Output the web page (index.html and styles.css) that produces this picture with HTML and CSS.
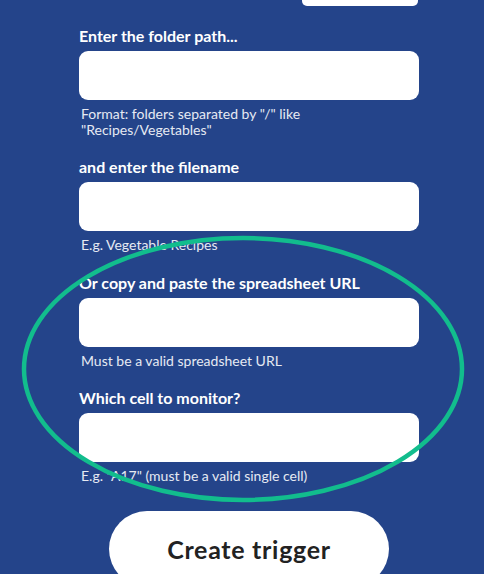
FILE: index.html
```html
<!DOCTYPE html>
<html lang="en">
<head>
<meta charset="utf-8">
<title>Create trigger</title>
<link rel="stylesheet" href="styles.css">
</head>
<body>
<div class="page">
  <div class="top-row"><div class="top-btn"></div></div>
  <form class="form">
    <div class="field">
      <label class="label">Enter the folder path...</label>
      <div class="input"></div>
      <p class="help">Format: folders separated by "/" like<br>"Recipes/Vegetables"</p>
    </div>
    <div class="field">
      <label class="label">and enter the filename</label>
      <div class="input"></div>
      <p class="help">E.g. Vegetable Recipes</p>
    </div>
    <div class="field">
      <label class="label">Or copy and paste the spreadsheet URL</label>
      <div class="input"></div>
      <p class="help">Must be a valid spreadsheet URL</p>
    </div>
    <div class="field">
      <label class="label">Which cell to monitor?</label>
      <div class="input"></div>
      <p class="help">E.g. "A17" (must be a valid single cell)</p>
    </div>
  </form>
  <div class="actions"><button class="create">Create trigger</button></div>
  <svg class="annotation" width="484" height="574" viewBox="0 0 484 574">
    <ellipse cx="243" cy="369" rx="219" ry="131" fill="none" stroke="#12bd8d" stroke-width="4.5"/>
  </svg>
</div>
</body>
</html>
```
FILE: styles.css
```css
html, body {
  margin: 0;
  padding: 0;
  background: #24448a;
  font-family: Lato, "Noto Sans", sans-serif;
  color: #fff;
  height: 574px;
  overflow: hidden;
}
.page {
  position: relative;
  width: 484px;
  height: 574px;
}
.top-row {
  display: flex;
  justify-content: flex-end;
  padding-right: 66px;
}
.top-btn {
  width: 116px;
  height: 40px;
  margin-top: -34px;
  background: #fff;
  border-radius: 5px;
}
.form {
  display: flex;
  flex-direction: column;
  padding: 20px 65px 0 79px;
  gap: 20px;
}
.field {
  display: flex;
  flex-direction: column;
}
.label {
  display: block;
  font-weight: 700;
  font-size: 16px;
  line-height: 20px;
  height: 20px;
  margin-bottom: 5px;
}
.input {
  height: 49px;
  background: #fff;
  border-radius: 9px;
}
.help {
  margin: 6px 0 0 2px;
  font-size: 14px;
  line-height: 15.6px;
  color: #e6eaf3;
}
.actions {
  display: flex;
  justify-content: center;
  padding: 27px 0 0 14px;
}
.create {
  width: 280px;
  height: 76px;
  border: none;
  border-radius: 40px;
  background: #fff;
  color: #222;
  font-family: Lato, "Noto Sans", sans-serif;
  font-weight: 700;
  font-size: 25px;
  letter-spacing: 0.7px;
  padding: 0;
}
.annotation {
  position: absolute;
  left: 0;
  top: 0;
  pointer-events: none;
}
```
